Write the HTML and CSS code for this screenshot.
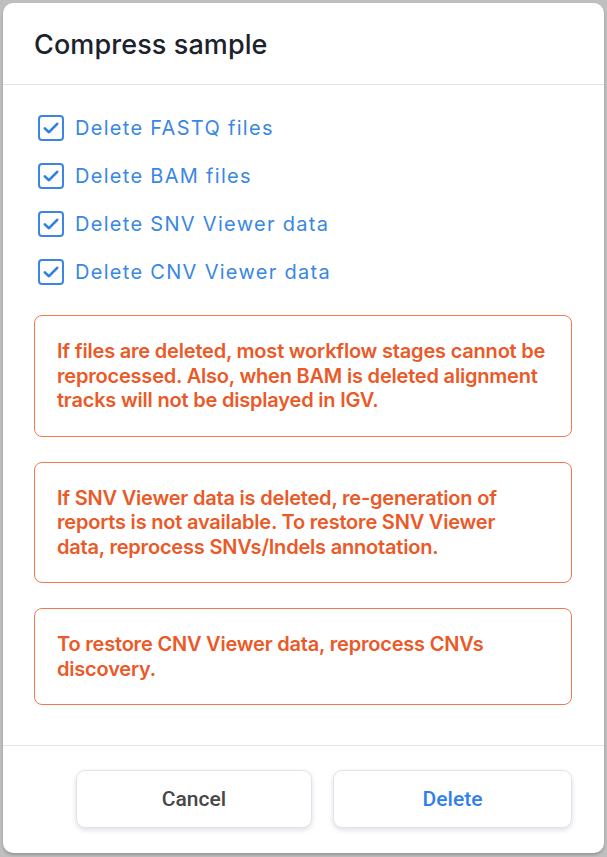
FILE: index.html
```html
<!DOCTYPE html>
<html>
<head>
<meta charset="utf-8">
<link rel="stylesheet" href="styles.css">
</head>
<body>
<div class="modal">
  <div class="modal-header">
    <h1 class="title">Compress sample</h1>
  </div>
  <div class="modal-body">
    <label class="check-row">
      <span class="checkbox"><svg viewBox="0 0 18 18" width="18" height="18"><path d="M2.8 9.4 L7 13.2 L15.2 4.8" fill="none" stroke="currentColor" stroke-width="2.6" stroke-linecap="round" stroke-linejoin="round"/></svg></span>
      <span class="check-label">Delete FASTQ files</span>
    </label>
    <label class="check-row">
      <span class="checkbox"><svg viewBox="0 0 18 18" width="18" height="18"><path d="M2.8 9.4 L7 13.2 L15.2 4.8" fill="none" stroke="currentColor" stroke-width="2.6" stroke-linecap="round" stroke-linejoin="round"/></svg></span>
      <span class="check-label">Delete BAM files</span>
    </label>
    <label class="check-row">
      <span class="checkbox"><svg viewBox="0 0 18 18" width="18" height="18"><path d="M2.8 9.4 L7 13.2 L15.2 4.8" fill="none" stroke="currentColor" stroke-width="2.6" stroke-linecap="round" stroke-linejoin="round"/></svg></span>
      <span class="check-label">Delete SNV Viewer data</span>
    </label>
    <label class="check-row">
      <span class="checkbox"><svg viewBox="0 0 18 18" width="18" height="18"><path d="M2.8 9.4 L7 13.2 L15.2 4.8" fill="none" stroke="currentColor" stroke-width="2.6" stroke-linecap="round" stroke-linejoin="round"/></svg></span>
      <span class="check-label">Delete CNV Viewer data</span>
    </label>

    <div class="warnings">
      <div class="warning">If files are deleted, most workflow stages cannot be<br>reprocessed. Also, when BAM is deleted alignment<br>tracks will not be displayed in IGV.</div>
      <div class="warning">If SNV Viewer data is deleted, re-generation of<br>reports is not available. To restore SNV Viewer<br>data, reprocess SNVs/Indels annotation.</div>
      <div class="warning">To restore CNV Viewer data, reprocess CNVs<br>discovery.</div>
    </div>
  </div>
  <div class="modal-footer">
    <button class="btn btn-cancel">Cancel</button>
    <button class="btn btn-delete">Delete</button>
  </div>
</div>
</body>
</html>
```

FILE: styles.css
```css
html, body {
  margin: 0;
  padding: 0;
}
body {
  background: #bfbfc0;
  width: 607px;
  height: 857px;
  padding: 3px 3px 0 3px;
  box-sizing: border-box;
  font-family: Inter, "Noto Sans", sans-serif;
  overflow: hidden;
}
.modal {
  width: 601px;
  height: 850px;
  background: #ffffff;
  border-radius: 10px;
  box-shadow: 0 2px 3px rgba(0, 0, 0, 0.22);
  display: flex;
  flex-direction: column;
}
.modal-header {
  height: 82px;
  box-sizing: border-box;
  border-bottom: 1px solid #dfe2ea;
  padding: 0 31px;
  display: flex;
  align-items: center;
}
.title {
  margin: 0;
  font-family: Inter, sans-serif;
  font-size: 27px;
  font-weight: 500;
  color: #1b222c;
  letter-spacing: 0.1px;
  padding-top: 1px;
}
.modal-body {
  flex: 1;
  padding: 19px 32px 0 31px;
  display: flex;
  flex-direction: column;
}
.check-row {
  height: 48px;
  display: flex;
  align-items: center;
  gap: 11px;
  padding-left: 4px;
}
.checkbox {
  width: 22px;
  height: 22px;
  border: 2px solid #3b86e4;
  border-radius: 4px;
  display: flex;
  align-items: center;
  justify-content: center;
  color: #2f7fe0;
}
.check-label {
  font-size: 20px;
  color: #3a87e2;
  letter-spacing: 1.3px;
}
.warnings {
  margin-top: 19px;
  display: flex;
  flex-direction: column;
  gap: 25px;
}
.warning {
  border: 1px solid #f07a50;
  border-radius: 8px;
  padding: 23px 12px 23px 22px;
  font-size: 20px;
  font-weight: 600;
  line-height: 24.5px;
  color: #ea5a28;
  letter-spacing: -0.2px;
  white-space: nowrap;
}
.modal-footer {
  height: 108px;
  box-sizing: border-box;
  border-top: 1px solid #e3e5ec;
  padding: 24px 32px 0 0;
  display: flex;
  justify-content: flex-end;
  align-items: flex-start;
  gap: 21px;
}
.btn {
  height: 58px;
  background: #ffffff;
  border: 1px solid #dfe3ec;
  border-radius: 9px;
  box-shadow: 0 2px 5px rgba(40, 50, 80, 0.15);
  font-family: Roboto, sans-serif;
  font-size: 21px;
  font-weight: 500;
}
.btn-cancel {
  width: 236px;
  color: #474747;
}
.btn-delete {
  width: 239px;
  color: #2f80ea;
}
```
